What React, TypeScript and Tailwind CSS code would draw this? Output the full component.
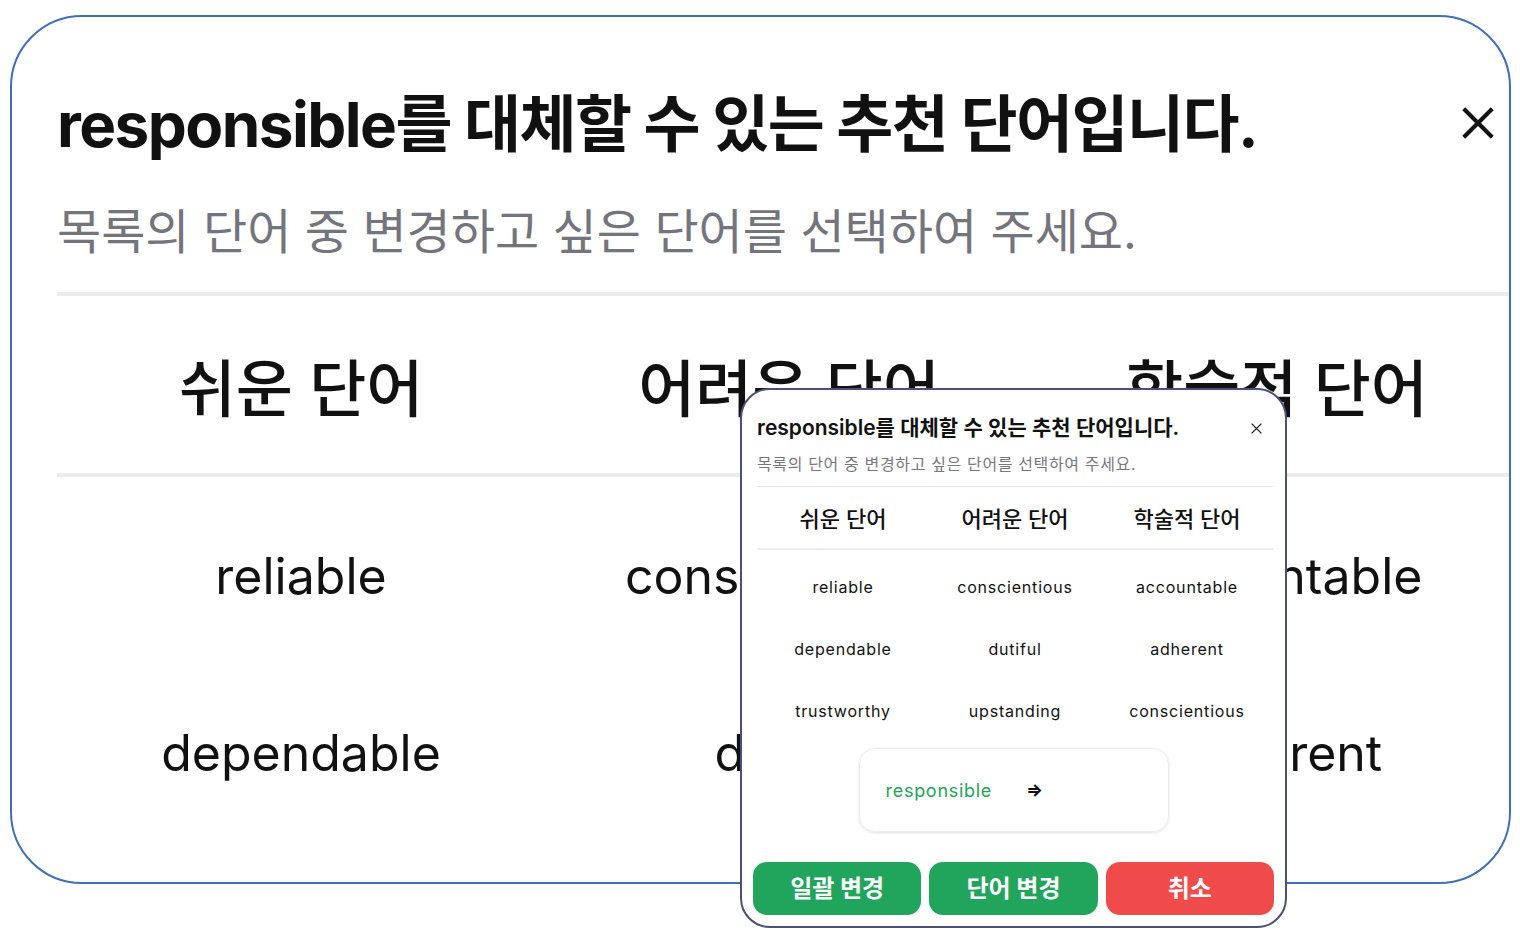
import React from "react";

const FONT = { fontFamily: 'Inter, "Noto Sans CJK KR", sans-serif' };

const bigRows = [
  ["reliable", "conscientious", "accountable"],
  ["dependable", "dutiful", "adherent"],
];

const smallRows = [
  ["reliable", "conscientious", "accountable"],
  ["dependable", "dutiful", "adherent"],
  ["trustworthy", "upstanding", "conscientious"],
];

function XIcon({ size, stroke }: { size: number; stroke: number }) {
  return (
    <svg width={size} height={size} viewBox="0 0 24 24" fill="none">
      <path d="M3 3L21 21M21 3L3 21" stroke="#111" strokeWidth={stroke} strokeLinecap="butt" />
    </svg>
  );
}

export default function App() {
  return (
    <div className="relative w-[1520px] h-[934px] bg-white overflow-hidden text-[#111]" style={FONT}>
      {/* Big zoomed card */}
      <div className="ml-[10px] mt-[15px] w-[1501px] h-[869px] border-2 border-[#3f6fb6] rounded-[72px] overflow-hidden bg-white">
        <div className="pl-[45px] pt-[72px]">
          <div className="flex items-center justify-between pr-[12px]">
            <h1 className="text-[62px] leading-[72px] font-bold tracking-[-0.025em] whitespace-nowrap">
              responsible를 대체할 수 있는 추천 단어입니다.
            </h1>
            <div className="-mt-[4px]">
              <XIcon size={38} stroke={2.6} />
            </div>
          </div>
          <p className="mt-[41px] text-[48px] leading-[60px] text-[#74747c] whitespace-nowrap">
            목록의 단어 중 변경하고 싶은 단어를 선택하여 주세요.
          </p>
          <div className="mt-[30px] h-[4px] bg-[#ececee]" />
          <div className="w-[1464px]">
            <div className="grid grid-cols-3 h-[177px] pt-[10px] items-center">
              <div className="text-center text-[62px] font-medium">쉬운 단어</div>
              <div className="text-center text-[62px] font-medium">어려운 단어</div>
              <div className="text-center text-[62px] font-medium">학술적 단어</div>
            </div>
            <div className="h-[4px] bg-[#ececee]" />
            <div className="pt-[11px]">
              {bigRows.map((row, i) => (
                <div key={i} className="grid grid-cols-3 h-[177px] items-center">
                  {row.map((w, j) => (
                    <div key={j} className="text-center text-[50px] text-[#111]">
                      {w}
                    </div>
                  ))}
                </div>
              ))}
            </div>
          </div>
        </div>
      </div>

      {/* Small dialog overlay */}
      <div className="absolute left-[740px] top-[388px] w-[547px] h-[540px] bg-white border-2 border-[#4b5079] rounded-[30px] flex flex-col">
        <div className="flex items-center justify-between pl-[15px] pr-[22px] pt-[24px]">
          <div className="text-[21px] leading-[28px] font-semibold whitespace-nowrap">
            responsible를 대체할 수 있는 추천 단어입니다.
          </div>
          <XIcon size={13} stroke={2.2} />
        </div>
        <div className="pl-[15px] pr-[12px]">
          <p className="mt-[11px] text-[16px] leading-[22px] text-[#77777f] tracking-[0.04em] whitespace-nowrap">
            목록의 단어 중 변경하고 싶은 단어를 선택하여 주세요.
          </p>
          <div className="mt-[11px] h-px bg-[#e4e4e7]" />
          <div className="grid grid-cols-3 h-[61px] pt-[4px] items-center">
            <div className="text-center text-[22px] font-medium">쉬운 단어</div>
            <div className="text-center text-[22px] font-medium">어려운 단어</div>
            <div className="text-center text-[22px] font-medium">학술적 단어</div>
          </div>
          <div className="h-[2px] bg-[#ececee]" />
          <div className="pt-[6px]">
            {smallRows.map((row, i) => (
              <div key={i} className="grid grid-cols-3 h-[62px] items-center">
                {row.map((w, j) => (
                  <div key={j} className="text-center text-[16px] tracking-[0.05em] text-[#111]">
                    {w}
                  </div>
                ))}
              </div>
            ))}
          </div>
        </div>
        <div className="flex justify-center mt-[6px]">
          <div className="w-[310px] h-[84px] rounded-[16px] border border-[#ececee] shadow-[0_1px_3px_rgba(0,0,0,0.12)] flex items-center pl-[26px]">
            <span className="text-[18px] tracking-[0.04em] text-[#22a55b]">responsible</span>
            <span className="ml-[34px] text-[18px] font-bold leading-none text-[#111]">⇒</span>
          </div>
        </div>
        <div className="mt-auto flex gap-[8px] pl-[11px] pr-[11px] pb-[11px]">
          <button className="flex-1 h-[53px] rounded-[14px] bg-[#21a55c] text-white text-[24px] font-bold">
            일괄 변경
          </button>
          <button className="flex-1 h-[53px] rounded-[14px] bg-[#21a55c] text-white text-[24px] font-bold">
            단어 변경
          </button>
          <button className="flex-1 h-[53px] rounded-[14px] bg-[#ef4b4a] text-white text-[24px] font-bold">
            취소
          </button>
        </div>
      </div>
    </div>
  );
}
